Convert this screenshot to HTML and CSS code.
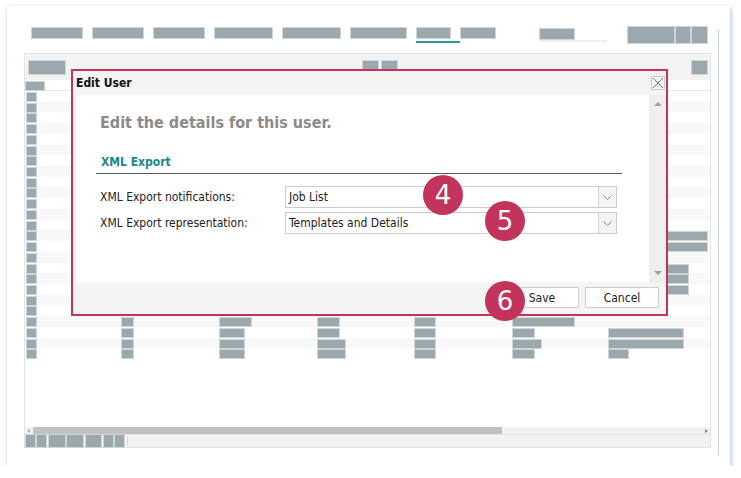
FILE: index.html
```html
<!DOCTYPE html>
<html lang="en">
<head>
    <meta charset="UTF-8">
    <meta name="viewport" content="width=device-width, initial-scale=1.0">
    <title>Edit User</title>
    <link rel="stylesheet" href="styles.css">
</head>
<body>
    <div class="card">
        <div class="main">
            <!-- Top navigation (blurred placeholders) -->
            <div class="nav">
                <div class="nav-tabs">
                    <span class="bar" style="width:50px"></span>
                    <span class="bar" style="width:50px"></span>
                    <span class="bar" style="width:50px"></span>
                    <span class="bar" style="width:57px"></span>
                    <span class="bar" style="width:57px"></span>
                    <span class="bar" style="width:55px"></span>
                    <span class="bar tab-active" style="width:33px"></span>
                    <span class="bar" style="width:34px"></span>
                </div>
                <div class="nav-search">
                    <span class="bar" style="width:34px"></span>
                </div>
                <div class="nav-tools">
                    <span class="bar tall" style="width:46px"></span>
                    <span class="bar tall" style="width:14px"></span>
                    <span class="bar tall" style="width:15px"></span>
                </div>
            </div>

            <!-- Users grid -->
            <div class="panel">
                <div class="panel-head">
                    <span class="bar big" style="width:36px"></span>
                    <span class="bar big head-mid" style="width:15px"></span>
                    <span class="bar big head-mid2" style="width:15px"></span>
                    <span class="bar big head-right" style="width:15px"></span>
                </div>
                <div class="thead">
                    <span class="bar small" style="width:18px"></span>
                </div>
                <div class="rows">
                    <div class="row"><span class="bar cell"></span></div>
                    <div class="row"><span class="bar cell"></span></div>
                    <div class="row"><span class="bar cell"></span></div>
                    <div class="row"><span class="bar cell"></span></div>
                    <div class="row"><span class="bar cell"></span></div>
                    <div class="row"><span class="bar cell"></span></div>
                    <div class="row"><span class="bar cell"></span></div>
                    <div class="row"><span class="bar cell"></span></div>
                    <div class="row"><span class="bar cell"></span></div>
                    <div class="row"><span class="bar cell"></span></div>
                    <div class="row"><span class="bar cell"></span></div>
                    <div class="row"><span class="bar cell"></span></div>
                    <div class="row"><span class="bar cell"></span></div>
                    <div class="row"><span class="bar cell"></span><i></i><i></i><i></i><i></i><i></i><span class="bar cell" style="width:98px"></span></div>
                    <div class="row"><span class="bar cell"></span><i></i><i></i><i></i><i></i><i></i><span class="bar cell" style="width:98px"></span></div>
                    <div class="row"><span class="bar cell"></span></div>
                    <div class="row"><span class="bar cell"></span><i></i><i></i><i></i><i></i><i></i><span class="bar cell" style="width:79px"></span></div>
                    <div class="row"><span class="bar cell"></span><i></i><i></i><i></i><i></i><i></i><span class="bar cell" style="width:79px"></span></div>
                    <div class="row"><span class="bar cell"></span><i></i><i></i><i></i><i></i><i></i><span class="bar cell" style="width:79px"></span></div>
                    <div class="row"><span class="bar cell"></span></div>
                    <div class="row"><span class="bar cell"></span></div>
                    <div class="row">
                        <span class="bar cell"></span>
                        <span class="bar cell" style="width:11px"></span>
                        <span class="bar cell" style="width:31px"></span>
                        <span class="bar cell" style="width:21px"></span>
                        <span class="bar cell" style="width:20px"></span>
                        <span class="bar cell" style="width:61px"></span>
                    </div>
                    <div class="row">
                        <span class="bar cell"></span>
                        <span class="bar cell" style="width:11px"></span>
                        <span class="bar cell" style="width:24px"></span>
                        <span class="bar cell" style="width:21px"></span>
                        <span class="bar cell" style="width:20px"></span>
                        <span class="bar cell" style="width:21px"></span>
                        <span class="bar cell" style="width:74px"></span>
                    </div>
                    <div class="row">
                        <span class="bar cell"></span>
                        <span class="bar cell" style="width:11px"></span>
                        <span class="bar cell" style="width:24px"></span>
                        <span class="bar cell" style="width:27px"></span>
                        <span class="bar cell" style="width:20px"></span>
                        <span class="bar cell" style="width:28px"></span>
                        <span class="bar cell" style="width:74px"></span>
                    </div>
                    <div class="row">
                        <span class="bar cell"></span>
                        <span class="bar cell" style="width:11px"></span>
                        <span class="bar cell" style="width:24px"></span>
                        <span class="bar cell" style="width:27px"></span>
                        <span class="bar cell" style="width:20px"></span>
                        <span class="bar cell" style="width:21px"></span>
                        <span class="bar cell" style="width:19px"></span>
                    </div>
                </div>
                <div class="hscroll">
                    <span class="arrow-left"></span>
                    <span class="hscroll-thumb"></span>
                    <span class="arrow-right"></span>
                </div>
                <div class="toolbar">
                    <div class="tool-group">
                        <span class="bar tool" style="width:9px"></span>
                        <span class="bar tool" style="width:9px"></span>
                    </div>
                    <div class="tool-group">
                        <span class="bar tool" style="width:16px"></span>
                        <span class="bar tool" style="width:16px"></span>
                    </div>
                    <div class="tool-group">
                        <span class="bar tool" style="width:15px"></span>
                    </div>
                    <div class="tool-group">
                        <span class="bar tool" style="width:9px"></span>
                        <span class="bar tool" style="width:9px"></span>
                    </div>
                    <span class="tool-sep"></span>
                </div>
            </div>
        </div>
        <div class="rail"></div>

        <!-- Edit User dialog -->
        <div class="dialog">
            <div class="dialog-title">
                <span>Edit User</span>
                <span class="close-btn">
                    <svg width="12" height="12" viewBox="0 0 12 12"><path d="M1 1L11 11M11 1L1 11" stroke="#777" stroke-width="1" fill="none"/></svg>
                </span>
            </div>
            <div class="dialog-body">
                <div class="dialog-content">
                    <h2 class="dialog-heading">Edit the details for this user.</h2>
                    <div class="section-head">XML Export</div>
                    <div class="field">
                        <label>XML Export notifications:</label>
                        <div class="dropdown">
                            <span class="dropdown-value">Job List</span>
                            <span class="dropdown-btn">
                                <svg width="9" height="5" viewBox="0 0 9 5"><path d="M0.5 0.5L4.5 4.5L8.5 0.5" stroke="#888" stroke-width="1" fill="none"/></svg>
                            </span>
                        </div>
                    </div>
                    <div class="field">
                        <label>XML Export representation:</label>
                        <div class="dropdown">
                            <span class="dropdown-value">Templates and Details</span>
                            <span class="dropdown-btn">
                                <svg width="9" height="5" viewBox="0 0 9 5"><path d="M0.5 0.5L4.5 4.5L8.5 0.5" stroke="#888" stroke-width="1" fill="none"/></svg>
                            </span>
                        </div>
                    </div>
                </div>
                <div class="vscroll">
                    <span class="arrow-up"></span>
                    <span class="arrow-down"></span>
                </div>
            </div>
            <div class="dialog-footer">
                <button class="btn">Save</button>
                <button class="btn">Cancel</button>
            </div>
        </div>

        <!-- Step callouts -->
        <span class="callout step-4">4</span>
        <span class="callout step-5">5</span>
        <span class="callout step-6">6</span>
    </div>
</body>
</html>
```

FILE: styles.css
```css
body {
    margin: 0;
    background-color: #fff;
    font-family: "DejaVu Sans Condensed", "DejaVu Sans", sans-serif;
    font-stretch: condensed;
}

.card {
    position: relative;
    display: flex;
    width: 723px;
    height: 460px;
    margin: 6px 0 0 7px;
    padding-left: 17px;
    box-sizing: border-box;
    background-color: #fff;
    box-shadow: 1px 2px 5px rgba(110, 130, 140, 0.5);
}

.main {
    width: 687px;
}

.rail {
    margin: 24px 0 11px 7px;
    border-left: 1px solid #c5cbce;
}

/* placeholder bars */
.bar {
    display: block;
    height: 10px;
    background-color: #9ba8ae;
    box-shadow: 0 0 0 1px #cfd6d9;
}

.bar.tall {
    height: 16px;
}

.bar.big {
    height: 13px;
}

.bar.small {
    height: 8px;
}

/* Top navigation */
.nav {
    display: flex;
    align-items: flex-start;
    height: 47px;
    padding: 22px 0 0 8px;
    box-sizing: border-box;
}

.nav-tabs {
    display: flex;
    gap: 11px;
}

.tab-active {
    position: relative;
}

.tab-active::after {
    content: "";
    position: absolute;
    left: -1px;
    right: -10px;
    top: 13px;
    height: 2px;
    background-color: #2a9b98;
}

.nav-search {
    width: 67px;
    height: 12px;
    margin-left: 45px;
    border-bottom: 2px solid #eeeeee;
}

.nav-search .bar {
    margin-top: 1px;
}

.nav-tools {
    display: flex;
    gap: 2px;
    margin: -1px 4px 0 auto;
}

/* Grid panel */
.panel {
    display: flex;
    flex-direction: column;
    height: 395px;
    border: 1px solid #e3e3e3;
    box-sizing: border-box;
    background-color: #fff;
}

.panel-head {
    display: flex;
    height: 26px;
    padding: 7px 3px 0 4px;
    box-sizing: border-box;
    background-color: #f3f3f3;
}

.head-mid {
    margin-left: 298px;
}

.head-mid2 {
    margin-left: 4px;
}

.head-right {
    margin-left: auto;
}

.thead {
    height: 11px;
    padding: 2px 0 0 1px;
    box-sizing: border-box;
    border-bottom: 1px solid #e8e8e8;
}

.rows {
    flex: 1;
}

.row {
    display: grid;
    grid-template-columns: 95px 98px 98px 97px 98px 96px 1fr;
    align-items: start;
    height: 10.72px;
    padding-left: 2px;
}

.row:nth-child(even) {
    background-color: #f8f8f8;
}

.bar.cell {
    width: 9px;
    height: 8px;
    margin-top: 2px;
}

.hscroll {
    display: flex;
    align-items: center;
    height: 7px;
    background-color: #f1f1f1;
}

.arrow-left {
    width: 0;
    height: 0;
    margin: 0 3px 0 2px;
    border-top: 2px solid transparent;
    border-bottom: 2px solid transparent;
    border-right: 3px solid #aaa;
}

.hscroll-thumb {
    width: 469px;
    height: 7px;
    background-color: #c1c1c1;
}

.arrow-right {
    width: 0;
    height: 0;
    margin: 0 2px 0 auto;
    border-top: 2px solid transparent;
    border-bottom: 2px solid transparent;
    border-left: 3px solid #888;
}

.toolbar {
    display: flex;
    align-items: flex-start;
    gap: 3px;
    height: 13px;
    padding-left: 1px;
    box-sizing: border-box;
    border-top: 1px solid #e4e4e4;
    background-color: #f3f3f3;
}

.tool-group {
    display: flex;
    gap: 2px;
}

.bar.tool {
    height: 12px;
}

.tool-sep {
    width: 1px;
    height: 10px;
    margin: 1px 0 0 0;
    background-color: #dadada;
}

/* Edit User dialog */
.dialog {
    position: absolute;
    left: 64px;
    top: 63px;
    width: 597px;
    height: 247px;
    display: flex;
    flex-direction: column;
    box-sizing: border-box;
    border: 2px solid #c2355a;
    background-color: #f4f4f4;
    font-size: 12px;
    color: #222;
}

.dialog-title {
    display: flex;
    align-items: center;
    height: 24px;
    padding-left: 3px;
    font-weight: bold;
    color: #111;
}

.close-btn {
    display: flex;
    align-items: center;
    justify-content: center;
    width: 14px;
    height: 14px;
    margin: 0 1px 0 auto;
    box-sizing: border-box;
    border: 1px solid #cccccc;
}

.dialog-body {
    flex: 1;
    display: flex;
    padding-left: 3px;
}

.dialog-content {
    flex: 1;
    padding: 16px 27px 0 20px;
    background-color: #fff;
}

.dialog-heading {
    height: 20px;
    margin: 2px 0 0 4px;
    font-size: 16px;
    line-height: 20px;
    font-weight: bold;
    color: #8a8a8a;
}

.section-head {
    height: 19px;
    margin-top: 21px;
    padding-left: 5px;
    line-height: 16px;
    border-bottom: 1px solid #4c5b62;
    font-weight: bold;
    color: #168a8a;
}

.field {
    display: flex;
    align-items: center;
    height: 22px;
    margin: 12px 0 0 4px;
}

.field + .field {
    margin-top: 4px;
}

.field label {
    width: 185px;
}

.dropdown {
    display: flex;
    width: 332px;
    height: 22px;
    box-sizing: border-box;
    border: 1px solid #cccccc;
}

.dropdown-value {
    flex: 1;
    padding-left: 3px;
    line-height: 20px;
}

.dropdown-btn {
    display: flex;
    align-items: center;
    justify-content: center;
    width: 17px;
    border-left: 1px solid #d4d4d4;
    background-color: #f4f4f4;
}

.vscroll {
    display: flex;
    flex-direction: column;
    justify-content: space-between;
    align-items: center;
    width: 17px;
    padding: 7px 0 7px;
    box-sizing: border-box;
    background-color: #efefef;
}

.arrow-up {
    width: 0;
    height: 0;
    border-left: 4px solid transparent;
    border-right: 4px solid transparent;
    border-bottom: 4px solid #a0a0a0;
}

.arrow-down {
    width: 0;
    height: 0;
    border-left: 4px solid transparent;
    border-right: 4px solid transparent;
    border-top: 4px solid #a0a0a0;
}

.dialog-footer {
    display: flex;
    justify-content: flex-end;
    gap: 6px;
    height: 32px;
    padding: 5px 7px 0 0;
    box-sizing: border-box;
}

.btn {
    width: 74px;
    height: 21px;
    padding: 0;
    border: 1px solid #cfcfcf;
    background-color: #fff;
    font-family: inherit;
    font-stretch: condensed;
    font-size: 12px;
    color: #222;
}

/* Step callouts */
.callout {
    position: absolute;
    display: flex;
    align-items: center;
    justify-content: center;
    width: 40px;
    height: 40px;
    border-radius: 50%;
    background-color: #c2345b;
    color: #fff;
    font-family: "DejaVu Sans", sans-serif;
    font-stretch: normal;
    font-size: 26px;
}

.step-4 {
    left: 416px;
    top: 169px;
}

.step-5 {
    left: 478px;
    top: 195px;
}

.step-6 {
    left: 478px;
    top: 275px;
}
```
